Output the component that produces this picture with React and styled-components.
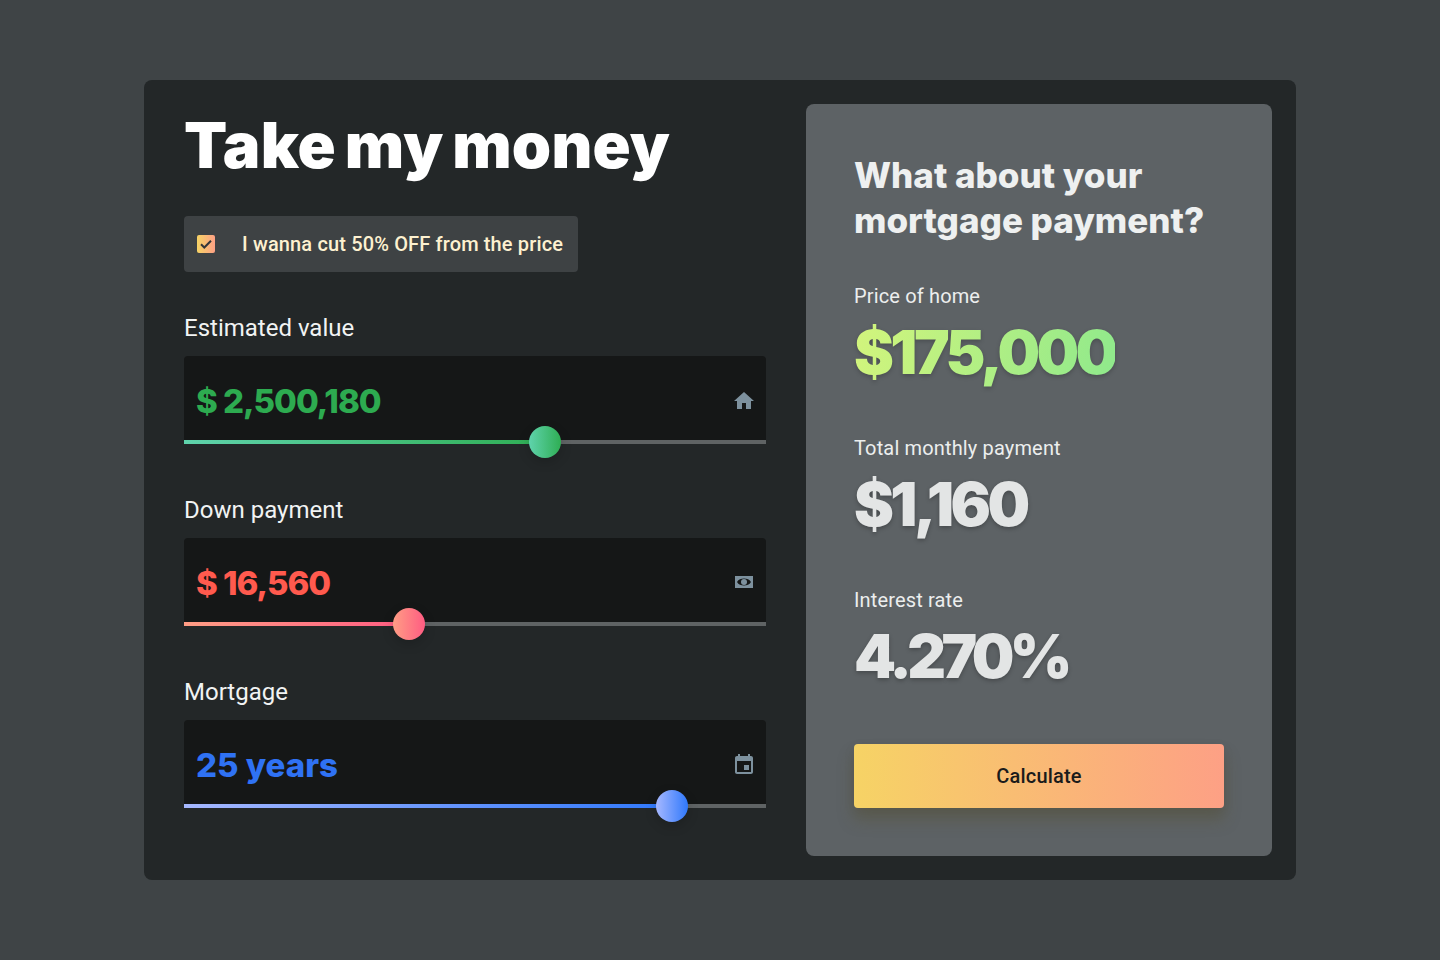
import React from 'react';
import styled, { createGlobalStyle } from 'styled-components';

const GlobalStyle = createGlobalStyle`
  html, body { margin: 0; padding: 0; height: 100%; }
  body {
    background: #3f4446;
    font-family: Roboto, "Liberation Sans", sans-serif;
  }
  * { box-sizing: border-box; }
`;

const display = `Inter, "Noto Sans", sans-serif`;

const tones = {
  green: { from: '#5fd3ac', to: '#2fae54', text: '#2dab50' },
  red: { from: '#ff9d85', to: '#ff5c82', text: '#ff5a4e' },
  blue: { from: '#a6b8ff', to: '#2f78fb', text: '#2f72f4' },
};

const Page = styled.div`
  width: 1440px;
  height: 960px;
  display: flex;
  align-items: center;
  justify-content: center;
`;

const Card = styled.main`
  width: 1152px;
  height: 800px;
  padding: 24px;
  display: flex;
  justify-content: space-between;
  background: #232728;
  border-radius: 8px;
`;

const Left = styled.section`
  width: 582px;
  margin-left: 16px;
`;

const Title = styled.h1`
  margin: 0;
  height: 112px;
  color: #fff;
  font-family: ${display};
  font-size: 63px;
  font-weight: 900;
  line-height: 82px;
  letter-spacing: 0.2px;
  word-spacing: -4px;
`;

const Discount = styled.label`
  display: inline-flex;
  align-items: center;
  height: 56px;
  padding: 0 15px 0 13px;
  background: #3e4244;
  border-radius: 4px;
  color: #fdf1d0;
  font-size: 20px;
  font-weight: 500;
  letter-spacing: 0.14px;
`;

const Check = styled.span`
  width: 18px;
  height: 18px;
  margin-right: 27px;
  display: flex;
  align-items: center;
  justify-content: center;
  background: linear-gradient(90deg, #f6d365, #fda085);
  border-radius: 2px;
`;

const Field = styled.div`
  margin-top: 50px;
  &:first-of-type {
    margin-top: 40px;
  }
`;

const FieldLabel = styled.div`
  height: 32px;
  margin-bottom: 12px;
  color: #f1f3f3;
  font-size: 24px;
  line-height: 32px;
`;

const InputBox = styled.div`
  height: 84px;
  padding: 6px 10px 0 12px;
  display: flex;
  align-items: center;
  justify-content: space-between;
  background: #151717;
  border-radius: 4px 4px 0 0;
`;

const Amount = styled.span`
  color: ${({ $tone }) => tones[$tone].text};
  font-family: ${display};
  font-size: 33px;
  font-weight: 800;
  letter-spacing: ${({ $spacing }) => $spacing}px;
`;

const Track = styled.div`
  position: relative;
  height: 4px;
  background: #5f6364;
`;

const Fill = styled.div`
  height: 100%;
  background: linear-gradient(90deg, ${({ $tone }) => tones[$tone].from}, ${({ $tone }) => tones[$tone].to});
`;

const Thumb = styled.div`
  position: absolute;
  top: -14px;
  width: 32px;
  height: 32px;
  margin-left: -16px;
  border-radius: 50%;
  background: linear-gradient(90deg, ${({ $tone }) => tones[$tone].from}, ${({ $tone }) => tones[$tone].to});
  box-shadow: 0 4px 12px rgba(0, 0, 0, 0.18);
`;

const Panel = styled.aside`
  width: 466px;
  padding: 49px 48px 0;
  background: #5d6265;
  border-radius: 8px;
`;

const PanelTitle = styled.h2`
  margin: 0 0 39px;
  color: #eef0f0;
  font-family: ${display};
  font-size: 35px;
  font-weight: 800;
  line-height: 45px;
`;

const Stat = styled.div`
  height: 152px;
`;

const StatLabel = styled.div`
  color: #eceeee;
  font-size: 20px;
  line-height: 28px;
  letter-spacing: 0.15px;
`;

const StatValue = styled.div`
  width: max-content;
  color: #e3e5e5;
  font-family: ${display};
  font-size: 60px;
  font-weight: 900;
  line-height: 84px;
  letter-spacing: ${({ $spacing }) => $spacing}px;
  text-shadow: 0 2px 4px rgba(0, 0, 0, 0.25);
  ${({ $highlight }) => $highlight && `
    background: linear-gradient(105deg, #d4f57c, #8ee98c);
    -webkit-background-clip: text;
    background-clip: text;
    color: transparent;
    text-shadow: none;
    filter: drop-shadow(0 2px 2px rgba(0, 0, 0, 0.2));
  `}
`;

const Button = styled.button`
  display: block;
  width: 100%;
  height: 64px;
  margin-top: 6px;
  border: 0;
  border-radius: 4px;
  background: linear-gradient(90deg, #f6d365, #fda085);
  box-shadow: 0 12px 16px rgba(90, 80, 40, 0.35), 0 4px 12px rgba(0, 0, 0, 0.08);
  color: #1b1b1b;
  font-family: Roboto, sans-serif;
  font-size: 20px;
  font-weight: 500;
  letter-spacing: 0.2px;
  cursor: pointer;
`;

const Icon = ({ children }) => (
  <svg width="24" height="24" viewBox="0 0 24 24" fill="#7d919e" fillRule="evenodd">{children}</svg>
);

const HomeIcon = () => (
  <Icon><path d="M10 20v-6h4v6h5v-8h3L12 3 2 12h3v8z" /></Icon>
);

const MoneyIcon = () => (
  <Icon>
    <path d="M3 5h18v12H3zM5 11c1.600-2.600 4-3.500 7-3.500s5.400.9 7 3.500c-1.600 2.600-4 3.500-7 3.500S6.600 13.600 5 11z" />
    <circle cx="12" cy="11" r="3" />
  </Icon>
);

const EventIcon = () => (
  <Icon>
    <path d="M17 12h-5v5h5v-5zM16 1v2H8V1H6v2H5c-1.110 0-1.990.9-1.990 2L3 19c0 1.100.89 2 2 2h14c1.100 0 2-.9 2-2V5c0-1.100-.9-2-2-2h-1V1h-2zm3 18H5V8h14v11z" />
  </Icon>
);

const fields = [
  { label: 'Estimated value', value: '$ 2,500,180', tone: 'green', percent: 62.03, spacing: -1, icon: <HomeIcon /> },
  { label: 'Down payment', value: '$ 16,560', tone: 'red', percent: 38.66, spacing: -1, icon: <MoneyIcon /> },
  { label: 'Mortgage', value: '25 years', tone: 'blue', percent: 83.85, spacing: 0, icon: <EventIcon /> },
];

const stats = [
  { label: 'Price of home', value: '$175,000', highlight: true, spacing: -3.6 },
  { label: 'Total monthly payment', value: '$1,160', spacing: -3.6 },
  { label: 'Interest rate', value: '4.270%', spacing: -4.6 },
];

const App = () => (
  <Page>
    <GlobalStyle />
    <Card>
      <Left>
        <Title>Take my money</Title>
        <Discount>
          <Check>
            <svg width="14" height="14" viewBox="0 0 14 14" fill="none" stroke="#33363a" strokeWidth="2">
              <path d="M2 7.200l3.300 3.300L12 3.800" />
            </svg>
          </Check>
          I wanna cut 50% OFF from the price
        </Discount>
        {fields.map((field) => (
          <Field key={field.label}>
            <FieldLabel>{field.label}</FieldLabel>
            <InputBox>
              <Amount $tone={field.tone} $spacing={field.spacing}>{field.value}</Amount>
              {field.icon}
            </InputBox>
            <Track>
              <Fill $tone={field.tone} style={{ width: `${field.percent}%` }} />
              <Thumb $tone={field.tone} style={{ left: `${field.percent}%` }} />
            </Track>
          </Field>
        ))}
      </Left>
      <Panel>
        <PanelTitle>What about your<br />mortgage payment?</PanelTitle>
        {stats.map((stat) => (
          <Stat key={stat.label}>
            <StatLabel>{stat.label}</StatLabel>
            <StatValue $highlight={stat.highlight} $spacing={stat.spacing}>{stat.value}</StatValue>
          </Stat>
        ))}
        <Button>Calculate</Button>
      </Panel>
    </Card>
  </Page>
);

export default App;
